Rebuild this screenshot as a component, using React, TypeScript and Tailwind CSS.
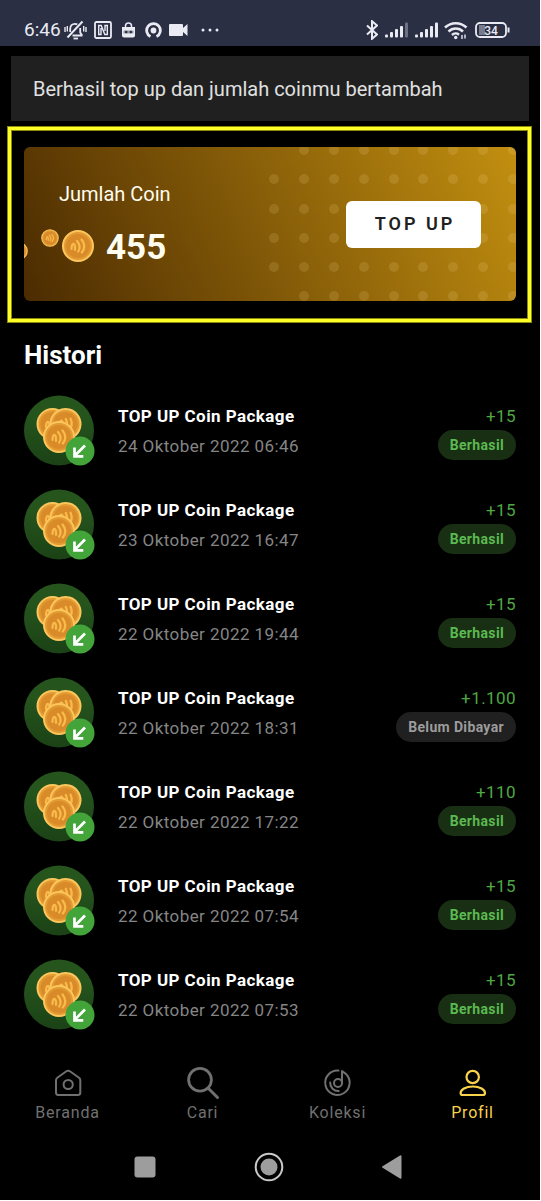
import React from 'react';

type Status = 'Berhasil' | 'Belum Dibayar';

interface HistoryEntry {
  date: string;
  amount: string;
  status: Status;
}

const entries: HistoryEntry[] = [
  { date: '24 Oktober 2022 06:46', amount: '+15', status: 'Berhasil' },
  { date: '23 Oktober 2022 16:47', amount: '+15', status: 'Berhasil' },
  { date: '22 Oktober 2022 19:44', amount: '+15', status: 'Berhasil' },
  { date: '22 Oktober 2022 18:31', amount: '+1.100', status: 'Belum Dibayar' },
  { date: '22 Oktober 2022 17:22', amount: '+110', status: 'Berhasil' },
  { date: '22 Oktober 2022 07:54', amount: '+15', status: 'Berhasil' },
  { date: '22 Oktober 2022 07:53', amount: '+15', status: 'Berhasil' },
];

const StatusBar = () => (
  <header className="flex h-[46px] items-center justify-between bg-[#2a2f44] pt-3.5 pr-[30px] pl-6 text-[#e9eaf2]">
    <div className="flex items-center">
      <span className="text-[19px] leading-6">6:46</span>
      <svg className="ml-[3px] h-5 w-[23px]" viewBox="0 0 23 20" fill="none" stroke="currentColor" strokeWidth="1.800">
        <path d="M8.500 15.500h10M6.200 12V9c0-3.200 2-5.200 4.800-5.200.8 0 1.600.2 2.300.6M16.200 8v4.500l2 3" />
        <path d="M3.500 17.500 18.500 1.500" strokeWidth="2" />
        <path d="M1 7v5M3.300 6v5.500M22 7v5M19.700 6v5.500" strokeWidth="1.400" />
        <path d="M9.500 18.500h4.500" />
      </svg>
      <svg className="ml-[7px] h-[18px] w-[18px]" viewBox="0 0 18 18" fill="none" stroke="currentColor">
        <rect x="1" y="1" width="16" height="16" rx="1.500" strokeWidth="1.800" />
        <path d="M7 7v6.500H4.700V4.500h2.500l3.600 9h2.500v-9H11V10" strokeWidth="1.400" />
      </svg>
      <svg className="ml-[9px] h-[17px] w-[15px]" viewBox="0 0 15 17">
        <path d="M4.500 6V4a3 3 0 0 1 6 0v2" fill="none" stroke="currentColor" strokeWidth="1.500" />
        <path d="M1 5h13v8.500a2 2 0 0 1-2 2H3a2 2 0 0 1-2-2z" fill="currentColor" />
        <path d="M2.500 8.500h10v3h-10z" fill="#9a9dac" />
        <circle cx="5.200" cy="10" r="1.300" fill="#2a2f44" />
        <circle cx="9.800" cy="10" r="1.300" fill="#2a2f44" />
      </svg>
      <svg className="ml-[9px] h-[17px] w-[17px]" viewBox="0 0 17 17">
        <path d="M5.500 14.600A6.800 6.800 0 1 1 11.500 14.600" fill="none" stroke="currentColor" strokeWidth="2.800" />
        <circle cx="8.500" cy="8.500" r="2.900" fill="currentColor" />
      </svg>
      <svg className="ml-[7px] h-3.5 w-[19px]" viewBox="0 0 19 14" fill="currentColor">
        <path d="M1 1h12a1 1 0 0 1 1 1v3l4.500-4v12L14 9v3a1 1 0 0 1-1 1H1a1 1 0 0 1-1-1V2a1 1 0 0 1 1-1z" />
      </svg>
      <svg className="ml-[13px] h-1 w-[18px]" viewBox="0 0 18 4" fill="currentColor">
        <circle cx="2" cy="2" r="1.500" />
        <circle cx="9" cy="2" r="1.500" />
        <circle cx="16" cy="2" r="1.500" />
      </svg>
    </div>
    <div className="flex items-center">
      <svg className="h-5 w-3" viewBox="0 0 12 20" fill="none" stroke="currentColor" strokeWidth="2">
        <path d="m1 5.500 10 9-5 4.300V1.200l5 4.300-10 9" />
      </svg>
      <SignalBars className="ml-[7px]" dim />
      <SignalBars className="ml-1.5" />
      <svg className="ml-[5px] h-[19px] w-6" viewBox="0 0 24 19" fill="none" stroke="currentColor" strokeWidth="2.500">
        <path d="M1 6.500a15.500 15.500 0 0 1 21.500 0M4.500 10.500a10.300 10.300 0 0 1 14.500 0M8 14a5.300 5.300 0 0 1 7-.3" />
        <circle cx="11.700" cy="16.500" r="1.700" fill="currentColor" stroke="none" />
        <path d="M18 14v4M21 13.500v4" strokeWidth="1.400" />
      </svg>
      <svg className="ml-[7px] h-4 w-[35px]" viewBox="0 0 35 16" fill="none">
        <rect x="1" y="1" width="30" height="14" rx="4" stroke="currentColor" strokeWidth="1.800" />
        <path d="M4 3h6v10H4z" fill="#777b8c" />
        <path d="M33.500 5.500v5" stroke="currentColor" strokeWidth="2" />
        <text x="16" y="12.500" textAnchor="middle" fill="currentColor" fontSize="12" fontWeight="500">34</text>
      </svg>
    </div>
  </header>
);

const SignalBars = ({ className, dim }: { className: string; dim?: boolean }) => (
  <svg className={`${className} h-4 w-6`} viewBox="0 0 24 16" fill="currentColor">
    <rect x="0" y="12.500" width="3" height="3" rx="1" />
    <rect x="5" y="10" width="3" height="5.500" rx="1" />
    <rect x="10" y="7" width="3" height="8.500" rx="1" />
    <rect x="15" y="4" width="3" height="11.500" rx="1" />
    <rect x="20" y="0.500" width="3" height="15" rx="1" opacity={dim ? 0.35 : 1} />
  </svg>
);

// Coin face, centred on the origin with a radius of 16
const Coin = () => (
  <>
    <circle r="15" fill="#e29a33" stroke="#fcc65c" strokeWidth="2" />
    <circle r="12" fill="#d98b29" />
    <g fill="none" stroke="#f9bb4b" strokeWidth="2.200" strokeLinecap="round">
      <path d="M-6.500 3c0-3.500 1-5.500 2.300-5 1.500.6 1.200 3 1.200 6" />
      <path d="M-1-5c3 3.500 3.200 7.500 1.200 10.500M3.500-6.500c3.300 4 3.500 9 .3 13" />
    </g>
  </>
);

const BalanceCard = () => (
  <section className="relative flex h-[154px] items-center justify-between overflow-hidden rounded-md bg-linear-[65deg] from-[#4b2b01] to-[#c28f10] pr-[35px]">
    <svg className="absolute top-0 right-0 h-[154px] w-[248px]" viewBox="0 0 248 154" fill="#ffe0a0" fillOpacity="0.14">
      {[3, 32, 62, 91, 120, 149].map((y, row) =>
        [6, 36, 66, 96, 126, 155, 185, 215, 245].map((x, col) =>
          col === 0 && (row === 0 || row === 5) ? null : <circle key={`${x}-${y}`} cx={x} cy={y} r="5" />
        )
      )}
    </svg>
    <div className="relative flex flex-col gap-5 text-[#fffdf0]">
      <h2 className="pl-[35px] text-xl leading-7">Jumlah Coin</h2>
      <div className="flex items-center gap-3">
        <svg className="h-10 w-[70px]" viewBox="0 0 70 40">
          <g transform="translate(-5 23) scale(.55)"><Coin /></g>
          <g transform="translate(26 10) scale(.55)"><Coin /></g>
          <g transform="translate(54 18)"><Coin /></g>
        </svg>
        <span className="text-[35px] leading-10 font-bold">455</span>
      </div>
    </div>
    <button type="button" className="relative h-[47px] w-[135px] rounded-md bg-white pl-[3px] text-lg font-semibold tracking-[3px] text-[#202020]">
      TOP UP
    </button>
  </section>
);

const CoinStack = () => (
  <svg className="h-[71px] w-[71px] shrink-0" viewBox="0 0 71 71">
    <defs>
      <linearGradient id="disc" x1="0" y1="0" x2="0" y2="1">
        <stop offset="0.3" stopColor="#25541d" />
        <stop offset="1" stopColor="#1b4216" />
      </linearGradient>
    </defs>
    <circle cx="35" cy="35.500" r="35" fill="url(#disc)" />
    <g transform="translate(28.500 29)"><Coin /></g>
    <g transform="translate(41.500 29) rotate(15)"><Coin /></g>
    <g transform="translate(35 42)"><Coin /></g>
    <circle cx="56" cy="56" r="14.500" fill="#43a43a" />
    <path d="M61 50.500 51 60.500M50.500 52.500v8.800h8.800" fill="none" stroke="#fff" strokeWidth="2.700" />
  </svg>
);

const HistoryRow = ({ entry }: { entry: HistoryEntry }) => (
  <li className="flex h-[70px] items-center">
    <CoinStack />
    <div className="ml-[23px] flex flex-1 flex-col gap-1.5 pt-0.5">
      <h3 className="text-[17px] leading-6 font-bold tracking-wide text-white">TOP UP Coin Package</h3>
      <p className="text-[17px] leading-6 tracking-wide text-[#858585]">{entry.date}</p>
    </div>
    <div className="flex flex-col items-end pt-0.5">
      <span className="text-[17px] leading-7 tracking-wide text-[#4fa844]">{entry.amount}</span>
      <span
        className={`rounded-full px-3 text-sm leading-[30px] font-bold tracking-wide ${
          entry.status === 'Berhasil' ? 'bg-[#182f13] text-[#5cb951]' : 'bg-[#202020] text-[#9c9c9c]'
        }`}
      >
        {entry.status}
      </span>
    </div>
  </li>
);

const NavItem = ({ label, active, children }: { label: string; active?: boolean; children: React.ReactNode }) => (
  <a href="#" className={`flex flex-col items-center ${active ? 'text-[#f8d34c]' : 'text-[#707070]'}`}>
    <svg className="h-9 w-9" viewBox="0 0 36 36" fill="none" stroke="currentColor" strokeWidth="2" strokeLinecap="round" strokeLinejoin="round">
      {children}
    </svg>
    <span className="text-base leading-6 tracking-wider">{label}</span>
  </a>
);

const App = () => {
  return (
    <div className="bg-white pr-px pb-px font-[Roboto,sans-serif]">
      <div className="bg-black pb-[18px]">
        <StatusBar />

        <div role="status" className="mx-[11px] mt-2.5 bg-[#202020] px-[22px] pt-[21px] pb-[19px] text-xl leading-[25px] text-[#e0e0e0]">
          Berhasil top up dan jumlah coinmu bertambah
        </div>

        <main>
          <div className="mt-[5px] mr-2 ml-[7px] border border-[#8b8b10]">
            <div className="border-[3px] border-[#ffff28]">
              <div className="border border-[#8b8b10] pt-4 pr-[11px] pb-[17px] pl-3">
                <BalanceCard />
              </div>
            </div>
          </div>

          <section className="px-6 pt-4">
            <h1 className="text-[26px] leading-8 font-bold text-white">Histori</h1>
            <ul className="mt-6 flex flex-col gap-6">
              {entries.map((entry) => (
                <HistoryRow key={entry.date} entry={entry} />
              ))}
            </ul>
          </section>
        </main>

        <nav className="mt-9 grid grid-cols-4">
          <NavItem label="Beranda">
            <path d="M6 15.200a3 3 0 0 1 1.300-2.400L16.400 6.300a3 3 0 0 1 3.500 0L29 12.800a3 3 0 0 1 1.300 2.400V27.500a2.500 2.500 0 0 1-2.500 2.500H8.500A2.500 2.500 0 0 1 6 27.500z" />
            <circle cx="18.200" cy="19.500" r="4.600" />
          </NavItem>
          <NavItem label="Cari">
            <circle cx="15" cy="14.700" r="11.400" strokeWidth="2.800" />
            <path d="m23.500 23.500 9 9" strokeWidth="3" />
          </NavItem>
          <NavItem label="Koleksi">
            <path d="M18.500 5.600a12.200 12.200 0 1 0 7 3L22 6v12" />
            <circle cx="18" cy="18" r="4" />
            <path d="M10.200 17.500a8 8 0 0 0 8.500 8.500" />
          </NavItem>
          <NavItem label="Profil" active>
            <circle cx="17.700" cy="12" r="6.200" strokeWidth="2.200" />
            <path d="M5.600 28c0-3.500 5-6.500 12.200-6.500S30 24.500 30 28c0 1.300-.8 2-2 2H7.600c-1.200 0-2-.7-2-2z" strokeWidth="2.200" />
          </NavItem>
        </nav>

        <div className="mt-[27px] flex items-center justify-center gap-[98px] pr-1 text-[#9d9d9d]">
          <button type="button" aria-label="Recent apps">
            <svg className="h-[22px] w-[22px]" viewBox="0 0 22 22" fill="currentColor">
              <rect x="0.500" y="0.500" width="21" height="21" rx="3" />
            </svg>
          </button>
          <button type="button" aria-label="Home">
            <svg className="h-[30px] w-[30px]" viewBox="0 0 30 30">
              <circle cx="15" cy="15" r="13.300" fill="none" stroke="#c9c9c9" strokeWidth="2" />
              <circle cx="15" cy="15" r="8.500" fill="currentColor" />
            </svg>
          </button>
          <button type="button" aria-label="Back">
            <svg className="h-6 w-5" viewBox="0 0 20 24" fill="currentColor">
              <path d="M.5 11.300 18 .5q1.500-.7 1.500 1v21q0 1.700-1.500 1L.5 12.700q-.8-.7 0-1.400z" />
            </svg>
          </button>
        </div>
      </div>
    </div>
  );
};

export default App;
